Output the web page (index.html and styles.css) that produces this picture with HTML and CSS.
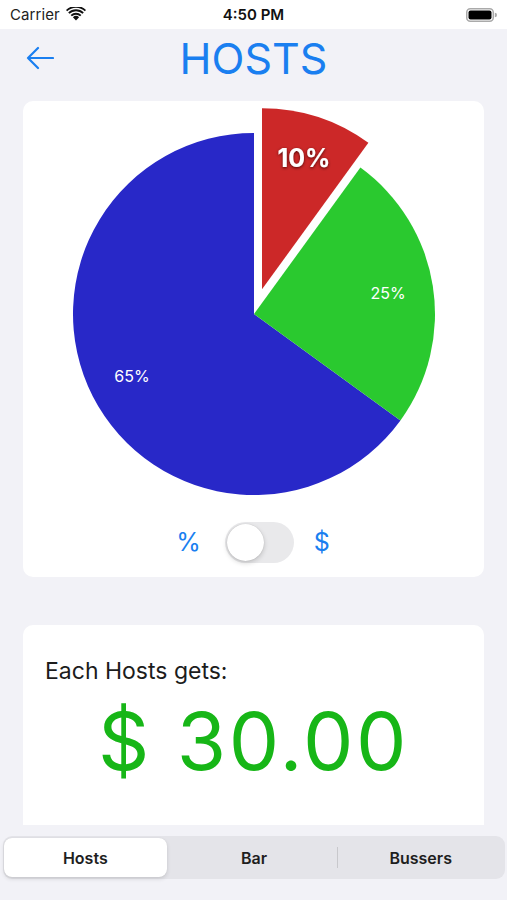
FILE: index.html
```html
<!DOCTYPE html>
<html>
<head>
<meta charset="utf-8">
<link rel="stylesheet" href="styles.css">
</head>
<body>
<div class="screen">
  <div class="status">
    <div class="status-left">
      <span class="carrier">Carrier</span>
      <svg class="wifi" width="20" height="14" viewBox="0 0 20 14">
        <path d="M10 13.5 L6.9 10.2 A4.5 4.5 0 0 1 13.1 10.2 Z" fill="#111"/>
        <path d="M4.6 7.9 A7.8 7.8 0 0 1 15.4 7.9 L14.1 9.3 A6 6 0 0 0 5.9 9.3 Z" fill="#111"/>
        <path d="M2.2 5.4 A11.2 11.2 0 0 1 17.8 5.4 L16.5 6.8 A9.4 9.4 0 0 0 3.5 6.8 Z" fill="#111"/>
        <path d="M0 3 A14.3 14.3 0 0 1 20 3 L18.8 4.3 A12.5 12.5 0 0 0 1.2 4.3 Z" fill="#111"/>
      </svg>
    </div>
    <div class="time">4:50 PM</div>
    <div class="status-right">
      <svg class="battery" width="31" height="14" viewBox="0 0 31 14">
        <rect x="0.75" y="0.75" width="26.5" height="12.5" rx="3.5" fill="none" stroke="#aaa" stroke-width="1.5"/>
        <rect x="2.5" y="2.5" width="23" height="9" rx="2" fill="#000"/>
        <path d="M28.8 4.8 A2.2 2.2 0 0 1 28.8 9.2 Z" fill="#aaa"/>
      </svg>
    </div>
  </div>

  <div class="nav">
    <svg class="back" width="28" height="24" viewBox="0 0 28 24">
      <path d="M27 12 H2 M12 2 L2 12 L12 22" fill="none" stroke="#1a7ff0" stroke-width="2.2" stroke-linecap="round" stroke-linejoin="round"/>
    </svg>
    <h1 class="title">HOSTS</h1>
  </div>

  <main class="content">
    <section class="card chart-card">
      <svg class="pie" width="461" height="410" viewBox="0 0 461 410">
        <defs>
          <filter id="shadow" x="-30%" y="-30%" width="160%" height="160%">
            <feDropShadow dx="0" dy="1" stdDeviation="1.6" flood-color="#3a0000" flood-opacity="0.9"/>
          </filter>
        </defs>
        <path d="M231 213 L377.43 319.39 A181 181 0 1 1 231 32 Z" fill="#2828c8"/>
        <path d="M231 213 L337.39 66.57 A181 181 0 0 1 377.43 319.39 Z" fill="#2ac92f"/>
        <path d="M239 188.3 L239 7.3 A181 181 0 0 1 345.39 41.87 Z" fill="#cc2828"/>
        <text class="lbl-big" x="281" y="66" text-anchor="middle" filter="url(#shadow)">10%</text>
        <text class="lbl" x="365" y="198" text-anchor="middle">25%</text>
        <text class="lbl" x="109" y="281" text-anchor="middle">65%</text>
      </svg>
      <div class="toggle-row">
        <span class="unit unit-pct">%</span>
        <div class="switch"><div class="knob"></div></div>
        <span class="unit">$</span>
      </div>
    </section>

    <section class="card result-card">
      <p class="each">Each Hosts gets:</p>
      <p class="amount">$ 30.00</p>
    </section>

    <div class="segmented">
      <div class="seg selected">Hosts</div>
      <div class="seg">Bar</div>
      <div class="seg divided">Bussers</div>
    </div>
  </main>
</div>
</body>
</html>
```

FILE: styles.css
```css
* { box-sizing: border-box; }
html, body {
  margin: 0;
  padding: 0;
  background: #f2f2f7;
  font-family: Inter, "Liberation Sans", Arial, sans-serif;
}
.screen {
  width: 507px;
  height: 900px;
  overflow: hidden;
  display: flex;
  flex-direction: column;
}
.status {
  height: 29px;
  background: #fff;
  display: flex;
  align-items: center;
  justify-content: space-between;
  padding: 0 10px 0 10px;
  position: relative;
}
.status-left {
  display: flex;
  align-items: center;
  gap: 6px;
  width: 120px;
}
.carrier {
  font-size: 15px;
  color: #222;
  letter-spacing: 0.1px;
}
.wifi { margin-top: -1px; }
.time {
  font-size: 15px;
  font-weight: 600;
  color: #111;
}
.status-right {
  width: 120px;
  display: flex;
  justify-content: flex-end;
}
.nav {
  height: 58px;
  display: flex;
  align-items: center;
  justify-content: center;
  position: relative;
}
.back {
  position: absolute;
  left: 26px;
  top: 17px;
}
.title {
  margin: 0;
  font-weight: 400;
  font-size: 43px;
  color: #1a7ff0;
  letter-spacing: 0;
  line-height: 1;
}
.content {
  padding-top: 14px;
  display: flex;
  flex-direction: column;
}
.card {
  background: #fff;
  margin: 0 23px;
  border-radius: 10px;
}
.chart-card {
  height: 476px;
  display: flex;
  flex-direction: column;
  align-items: center;
}
.pie { display: block; }
.lbl-big {
  font-family: Inter, "Liberation Sans", sans-serif;
  font-size: 25px;
  font-weight: 700;
  fill: #fff;
}
.lbl {
  font-family: Inter, "Liberation Sans", sans-serif;
  font-size: 16px;
  fill: #fff;
}
.toggle-row {
  margin-top: 11px;
  display: flex;
  align-items: center;
  gap: 20px;
  margin-left: -1px;
}
.unit {
  color: #1a7ff0;
  font-size: 25px;
  line-height: 1;
}
.unit-pct { margin-right: 4px; }
.switch {
  width: 69px;
  height: 41px;
  border-radius: 21px;
  background: #e9e9eb;
  padding: 2px;
  display: flex;
}
.knob {
  width: 37px;
  height: 37px;
  border-radius: 50%;
  background: #fff;
  box-shadow: 0 2px 5px rgba(0,0,0,0.18), 0 0 1px rgba(0,0,0,0.2);
}
.result-card {
  margin-top: 48px;
  height: 200px;
  border-radius: 10px 10px 0 0;
  padding: 33px 22px 0 22px;
}
.each {
  margin: 0;
  font-size: 23px;
  color: #1c1c1c;
  line-height: 26px;
}
.amount {
  margin: 17px 0 0 0;
  text-align: center;
  font-size: 80px;
  letter-spacing: 2.5px;
  line-height: 1;
  color: #17b617;
  font-weight: 400;
}
.segmented {
  margin: 11px 2px 0 3px;
  height: 43px;
  background: #e4e4e9;
  border-radius: 9px;
  display: grid;
  grid-template-columns: 1fr 1fr 1fr;
  padding: 2px 1px;
}
.seg {
  display: flex;
  align-items: center;
  justify-content: center;
  font-size: 16px;
  font-weight: 600;
  color: #1e1e1e;
  position: relative;
}
.seg.selected {
  background: #fff;
  border-radius: 8px;
  margin-right: 4px;
  box-shadow: 0 2px 4px rgba(0,0,0,0.12), 0 0 1px rgba(0,0,0,0.1);
}
.seg.divided::before {
  content: "";
  position: absolute;
  left: 0;
  top: 9px;
  bottom: 9px;
  width: 1px;
  background: #c8c8cc;
}
```
